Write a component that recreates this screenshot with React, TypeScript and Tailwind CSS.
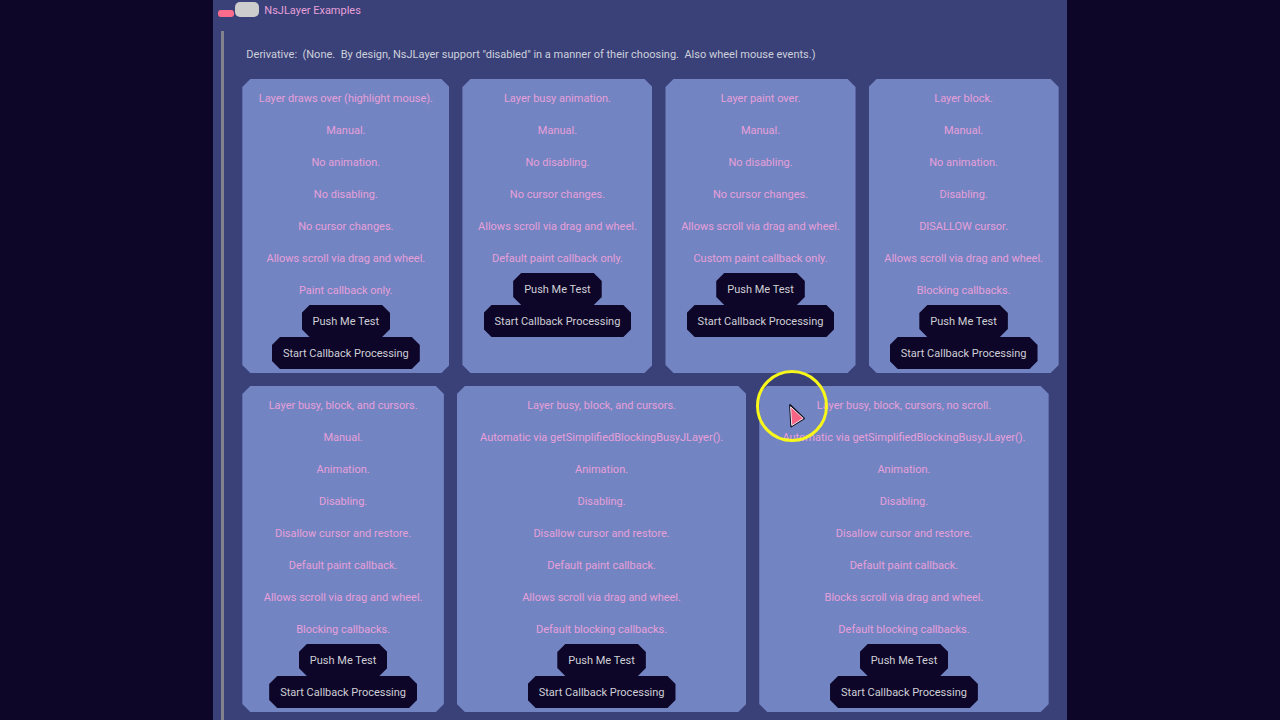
import { useState } from "react";

type LayerExample = {
  id: string;
  lines: string[];
};

const topRow: LayerExample[] = [
  {
    id: "highlight",
    lines: [
      "Layer draws over (highlight mouse).",
      "Manual.",
      "No animation.",
      "No disabling.",
      "No cursor changes.",
      "Allows scroll via drag and wheel.",
      "Paint callback only.",
    ],
  },
  {
    id: "busy",
    lines: [
      "Layer busy animation.",
      "Manual.",
      "No disabling.",
      "No cursor changes.",
      "Allows scroll via drag and wheel.",
      "Default paint callback only.",
    ],
  },
  {
    id: "paint",
    lines: [
      "Layer paint over.",
      "Manual.",
      "No disabling.",
      "No cursor changes.",
      "Allows scroll via drag and wheel.",
      "Custom paint callback only.",
    ],
  },
  {
    id: "block",
    lines: [
      "Layer block.",
      "Manual.",
      "No animation.",
      "Disabling.",
      "DISALLOW cursor.",
      "Allows scroll via drag and wheel.",
      "Blocking callbacks.",
    ],
  },
];

const bottomRow: LayerExample[] = [
  {
    id: "manual-all",
    lines: [
      "Layer busy, block, and cursors.",
      "Manual.",
      "Animation.",
      "Disabling.",
      "Disallow cursor and restore.",
      "Default paint callback.",
      "Allows scroll via drag and wheel.",
      "Blocking callbacks.",
    ],
  },
  {
    id: "automatic-all",
    lines: [
      "Layer busy, block, and cursors.",
      "Automatic via getSimplifiedBlockingBusyJLayer().",
      "Animation.",
      "Disabling.",
      "Disallow cursor and restore.",
      "Default paint callback.",
      "Allows scroll via drag and wheel.",
      "Default blocking callbacks.",
    ],
  },
  {
    id: "automatic-no-scroll",
    lines: [
      "Layer busy, block, cursors, no scroll.",
      "Automatic via getSimplifiedBlockingBusyJLayer().",
      "Animation.",
      "Disabling.",
      "Disallow cursor and restore.",
      "Default paint callback.",
      "Blocks scroll via drag and wheel.",
      "Default blocking callbacks.",
    ],
  },
];

// Corners are cut at 45 degrees on both cards and buttons
const cutCorners =
  "[clip-path:polygon(8px_0,calc(100%-8px)_0,100%_8px,100%_calc(100%-8px),calc(100%-8px)_100%,8px_100%,0_calc(100%-8px),0_8px)]";

function CutButton({ label }: { label: string }) {
  return (
    <button className={`${cutCorners} h-8 px-[11px] pt-0.5 bg-[#0d0628] text-[#cfcfd6] hover:bg-[#1c1440]`}>
      {label}
    </button>
  );
}

function LayerCard({ example }: { example: LayerExample }) {
  return (
    <section className={`${cutCorners} flex flex-col items-center bg-[#7384c3] pt-0.5 pb-1 text-[#e6a0d8]`}>
      {example.lines.map((line) => (
        <p key={line} className="h-8 leading-9">
          {line}
        </p>
      ))}
      <CutButton label="Push Me Test" />
      <CutButton label="Start Callback Processing" />
    </section>
  );
}

function MousePointer() {
  return (
    <svg
      className="pointer-events-none absolute left-[542px] top-[369px] h-[74px] w-[74px]"
      viewBox="0 0 74 74"
      fill="none"
      aria-hidden="true"
    >
      <circle cx="37" cy="37" r="34.5" stroke="#f7f71c" strokeWidth="3" />
      <path d="M35 36 L36.2 57.5 L49 49.5 Z" stroke="#10101c" strokeWidth="1.8" strokeLinejoin="round" />
      <path d="M35.6 37.8 L36.8 56.6 L48.2 49.4 Z" fill="#fa6484" stroke="#f2e6ee" strokeWidth="1" />
    </svg>
  );
}

export default function App() {
  const [isOpen, setIsOpen] = useState(true);

  return (
    <div className="h-screen overflow-hidden bg-[#0d0628]">
      <main className="relative mx-auto flex h-full w-2/3 flex-col bg-[#3a4179] font-[Roboto,sans-serif] text-[11px] whitespace-nowrap">
        <header className="flex h-[31px] shrink-0 items-start pt-[2px] pl-[5px]">
          <button
            className="flex items-end gap-px"
            aria-label="Toggle NsJLayer Examples"
            aria-expanded={isOpen}
            onClick={() => setIsOpen(!isOpen)}
          >
            <span className="h-[7px] w-4 rounded-[3px] bg-[#fb6c8c]" />
            <span className="h-[15px] w-6 rounded-[5px] bg-[#cdcdcd]" />
          </button>
          <h1 className="pl-[5px] leading-[18px] text-[#e6a0d8]">NsJLayer Examples</h1>
        </header>

        {isOpen && (
          <div className="ml-2 flex-1 border-l-3 border-[#83838f] pr-2 pl-[18px]">
            <p className="h-12 pl-1 leading-12 whitespace-pre text-[#cdd0da]">
              {'Derivative:  (None.  By design, NsJLayer support "disabled" in a manner of their choosing.  Also wheel mouse events.)'}
            </p>
            <div className="grid grid-cols-[207fr_190fr_190fr_190fr] gap-[13px]">
              {topRow.map((example) => (
                <LayerCard key={example.id} example={example} />
              ))}
            </div>
            <div className="mt-[13px] grid grid-cols-[202fr_290fr_290fr] gap-[13px] pr-2.5">
              {bottomRow.map((example) => (
                <LayerCard key={example.id} example={example} />
              ))}
            </div>
          </div>
        )}
        <MousePointer />
      </main>
    </div>
  );
}
